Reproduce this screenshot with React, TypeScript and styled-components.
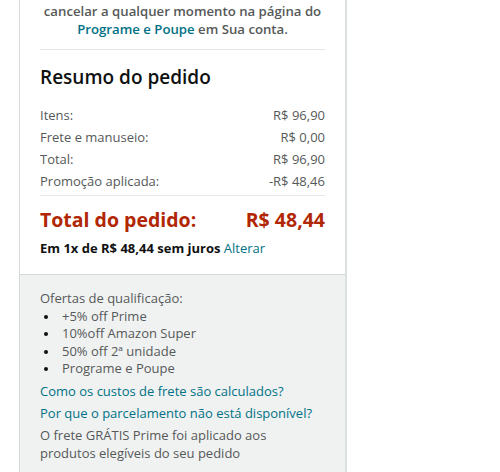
import React from 'react';
import styled, { createGlobalStyle } from 'styled-components';

const GlobalStyle = createGlobalStyle`
  html, body {
    margin: 0;
    padding: 0;
    background: #fff;
  }
  body {
    font-family: 'Open Sans', 'Liberation Sans', sans-serif;
    color: #0f1111;
  }
`;

const Page = styled.div`
  width: 500px;
  height: 472px;
  overflow: hidden;
  padding-left: 19px;
  box-sizing: border-box;
`;

const Card = styled.div`
  width: 328px;
  box-sizing: border-box;
  border-left: 1px solid #d5d9d9;
  border-right: 2px solid #dde0e0;
  min-height: 472px;
  display: flex;
  flex-direction: column;
`;

const Main = styled.div`
  padding: 2px 20px 17px 20px;
`;

const Note = styled.p`
  margin: 0;
  font-size: 13.2px;
  line-height: 18px;
  font-weight: 600;
  color: #565959;
  text-align: center;
`;

const Link = styled.a<{ $weight?: number }>`
  color: #007185;
  text-decoration: none;
  font-weight: ${(p) => p.$weight ?? 'inherit'};
`;

const Divider = styled.hr<{ $top: number; $bottom: number }>`
  border: 0;
  border-top: 1px solid #e7e7e7;
  margin: ${(p) => `${p.$top}px 0 ${p.$bottom}px`};
  height: 0;
`;

const Heading = styled.h2`
  margin: 0 0 16px;
  font-size: 19px;
  line-height: 24px;
  font-weight: 600;
  color: #0f1111;
`;

const Row = styled.div`
  display: flex;
  justify-content: space-between;
  font-size: 13px;
  line-height: 20px;
  color: #565959;
  & + & {
    margin-top: 2px;
  }
`;

const TotalRow = styled.div`
  display: flex;
  justify-content: space-between;
  font-size: 19.5px;
  line-height: 24px;
  font-weight: 700;
  color: #b12704;
`;

const Installments = styled.div`
  margin-top: 7px;
  font-size: 13px;
  line-height: 18px;
  font-weight: 700;
  color: #0f1111;
`;

const Secondary = styled.div`
  flex: 1;
  background: #f0f2f2;
  border-top: 1px solid #d5d9d9;
  padding: 15px 20px 20px;
  font-size: 13px;
  line-height: 17.5px;
  color: #565959;
`;

const Offers = styled.ul`
  margin: 0;
  padding: 0;
  list-style: none;
`;

const Offer = styled.li`
  display: flex;
  &::before {
    content: '';
    flex: none;
    width: 4px;
    height: 4px;
    border-radius: 50%;
    background: #0f1111;
    margin: 7px 14px 0 4px;
  }
`;

const InfoLine = styled.div`
  margin-top: 4px;
  line-height: 18px;
`;

const rows = [
  ['Itens:', 'R$ 96,90'],
  ['Frete e manuseio:', 'R$ 0,00'],
  ['Total:', 'R$ 96,90'],
  ['Promoção aplicada:', '-R$ 48,46'],
];

const offers = ['+5% off Prime', '10%off Amazon Super', '50% off 2ª unidade', 'Programe e Poupe'];

export default function App() {
  return (
    <>
      <GlobalStyle />
      <Page>
        <Card>
          <Main>
            <Note>
              cancelar a qualquer momento na página do
              <br />
              <Link href="#">Programe e Poupe</Link> em Sua conta.
            </Note>
            <Divider $top={11} $bottom={15} />
            <Heading>Resumo do pedido</Heading>
            {rows.map(([label, value]) => (
              <Row key={label}>
                <span>{label}</span>
                <span>{value}</span>
              </Row>
            ))}
            <Divider $top={4} $bottom={12} />
            <TotalRow>
              <span>Total do pedido:</span>
              <span>R$ 48,44</span>
            </TotalRow>
            <Installments>
              Em 1x de R$ 48,44 sem juros{' '}
              <Link href="#" $weight={400}>
                Alterar
              </Link>
            </Installments>
          </Main>
          <Secondary>
            <div>Ofertas de qualificação:</div>
            <Offers>
              {offers.map((o) => (
                <Offer key={o}>{o}</Offer>
              ))}
            </Offers>
            <InfoLine>
              <Link href="#">Como os custos de frete são calculados?</Link>
            </InfoLine>
            <InfoLine>
              <Link href="#">Por que o parcelamento não está disponível?</Link>
            </InfoLine>
            <InfoLine>
              O frete GRÁTIS Prime foi aplicado aos
              <br />
              produtos elegíveis do seu pedido
            </InfoLine>
          </Secondary>
        </Card>
      </Page>
    </>
  );
}
